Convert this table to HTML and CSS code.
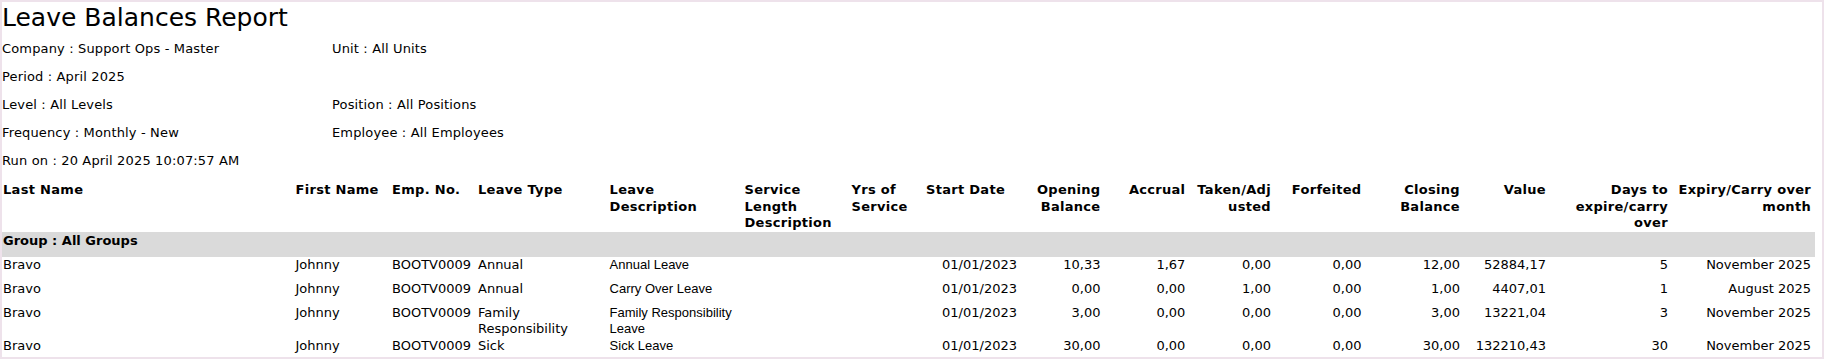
FILE: index.html
```html
<!DOCTYPE html>
<html lang="en">
<head>
<meta charset="utf-8">
<title>Leave Balances Report</title>
<link rel="stylesheet" href="styles.css">
</head>
<body>
<div class="page">
  <h1 class="title">Leave Balances Report</h1>
  <div class="meta">
    <div>Company : Support Ops - Master</div><div>Unit : All Units</div>
    <div>Period : April 2025</div><div></div>
    <div>Level : All Levels</div><div>Position : All Positions</div>
    <div>Frequency : Monthly - New</div><div>Employee : All Employees</div>
    <div>Run on : 20 April 2025 10:07:57 AM</div><div></div>
  </div>
  <table class="report">
    <colgroup>
      <col class="w-last"><col class="w-first"><col class="w-emp"><col class="w-type">
      <col class="w-desc"><col class="w-svc"><col class="w-yrs"><col class="w-start">
      <col class="w-open"><col class="w-accr"><col class="w-taken"><col class="w-forf">
      <col class="w-close"><col class="w-value"><col class="w-days"><col class="w-exp">
    </colgroup>
    <thead>
      <tr>
        <th class="l">Last Name</th>
        <th class="l">First Name</th>
        <th class="l">Emp. No.</th>
        <th class="l">Leave Type</th>
        <th class="l">Leave Description</th>
        <th class="l">Service Length Description</th>
        <th class="l">Yrs of Service</th>
        <th class="l">Start Date</th>
        <th class="r">Opening Balance</th>
        <th class="r">Accrual</th>
        <th class="r">Taken/Adj<br>usted</th>
        <th class="r">Forfeited</th>
        <th class="r">Closing Balance</th>
        <th class="r">Value</th>
        <th class="r">Days to expire/carry over</th>
        <th class="r last">Expiry/Carry over month</th>
      </tr>
    </thead>
    <tbody>
      <tr class="group"><td colspan="16">Group : All Groups</td></tr>
      <tr>
        <td class="l">Bravo</td><td class="l">Johnny</td><td class="l nw">BOOTV0009</td><td class="l">Annual</td>
        <td class="l desc">Annual Leave</td><td class="l"></td><td class="l"></td><td class="r">01/01/2023</td>
        <td class="r">10,33</td><td class="r">1,67</td><td class="r">0,00</td><td class="r">0,00</td>
        <td class="r">12,00</td><td class="r">52884,17</td><td class="r">5</td><td class="r last">November 2025</td>
      </tr>
      <tr>
        <td class="l">Bravo</td><td class="l">Johnny</td><td class="l nw">BOOTV0009</td><td class="l">Annual</td>
        <td class="l desc">Carry Over Leave</td><td class="l"></td><td class="l"></td><td class="r">01/01/2023</td>
        <td class="r">0,00</td><td class="r">0,00</td><td class="r">1,00</td><td class="r">0,00</td>
        <td class="r">1,00</td><td class="r">4407,01</td><td class="r">1</td><td class="r last">August 2025</td>
      </tr>
      <tr>
        <td class="l">Bravo</td><td class="l">Johnny</td><td class="l nw">BOOTV0009</td><td class="l">Family Responsibility</td>
        <td class="l desc">Family Responsibility Leave</td><td class="l"></td><td class="l"></td><td class="r">01/01/2023</td>
        <td class="r">3,00</td><td class="r">0,00</td><td class="r">0,00</td><td class="r">0,00</td>
        <td class="r">3,00</td><td class="r">13221,04</td><td class="r">3</td><td class="r last">November 2025</td>
      </tr>
      <tr>
        <td class="l">Bravo</td><td class="l">Johnny</td><td class="l nw">BOOTV0009</td><td class="l">Sick</td>
        <td class="l desc">Sick Leave</td><td class="l"></td><td class="l"></td><td class="r">01/01/2023</td>
        <td class="r">30,00</td><td class="r">0,00</td><td class="r">0,00</td><td class="r">0,00</td>
        <td class="r">30,00</td><td class="r">132210,43</td><td class="r">30</td><td class="r last">November 2025</td>
      </tr>
    </tbody>
  </table>
</div>
</body>
</html>
```
FILE: styles.css
```css
html, body {
  margin: 0;
  height: 100%;
}
body {
  background: #eee2eb;
  padding: 2px;
  box-sizing: border-box;
  overflow: hidden;
  font-family: "DejaVu Sans", Verdana, sans-serif;
  font-size: 13px;
  color: #000;
}
.page {
  background: #fff;
  height: 355px;
  overflow: hidden;
}
.title {
  margin: 0 0 2px 0;
  padding-top: 1px;
  height: 30px;
  font-size: 25px;
  font-weight: normal;
  line-height: 30px;
}
.meta {
  display: grid;
  grid-template-columns: 330px 1fr;
  grid-auto-rows: 28px;
  line-height: 28px;
  letter-spacing: 0.15px;
}
.report {
  margin-top: 7px;
  width: 1813px;
  table-layout: fixed;
  border-collapse: collapse;
  border-spacing: 0;
}
.report th,
.report td {
  padding: 0;
  line-height: 16.6px;
  vertical-align: top;
  overflow-wrap: break-word;
}
.report th {
  font-weight: bold;
  letter-spacing: 0.3px;
}
.report .l { text-align: left; padding: 0 6px 0 1px; }
.report .r { text-align: right; padding: 0 1px 0 6px; }
.report .r.last { padding-right: 4px; }
.report .nw { white-space: nowrap; }
.report tbody tr { height: 24px; }
.report tbody td { padding-top: 1px; }
.report .group td {
  background: #dadada;
  font-weight: bold;
  height: 25px;
  box-sizing: border-box;
  padding: 1px 1px 0 1px;
}
.report .desc {
  font-family: "Liberation Sans", Arial, sans-serif;
}
.w-last { width: 292.5px; }
.w-first { width: 96.5px; }
.w-emp { width: 86px; }
.w-type { width: 131.6px; }
.w-desc { width: 134.9px; }
.w-svc { width: 107.1px; }
.w-yrs { width: 74.4px; }
.w-start { width: 93px; }
.w-open { width: 83.5px; }
.w-accr { width: 84.9px; }
.w-taken { width: 85.6px; }
.w-forf { width: 90.5px; }
.w-close { width: 98.5px; }
.w-value { width: 86px; }
.w-days { width: 122px; }
.w-exp { width: 146px; }
```
